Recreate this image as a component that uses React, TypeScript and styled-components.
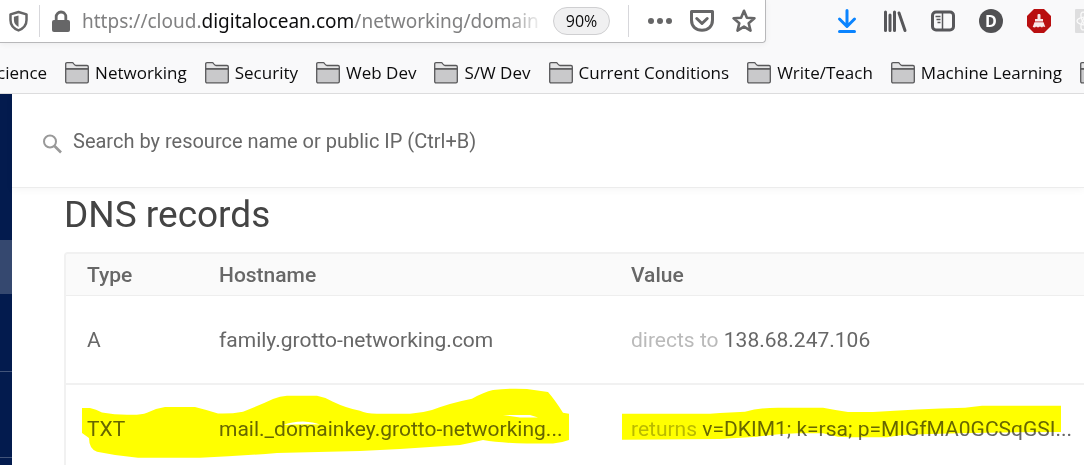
import React from "react";
import styled, { createGlobalStyle } from "styled-components";

const chromeFont = `"Open Sans", "Noto Sans", sans-serif`;
const siteFont = `Roboto, Lato, sans-serif`;

const GlobalStyle = createGlobalStyle`
  *, *::before, *::after { box-sizing: border-box; }
  body { margin: 0; background: #fff; }
  button, input { font: inherit; color: inherit; }
`;

const BrowserWindow = styled.div`
  display: flex;
  flex-direction: column;
  height: 100vh;
  overflow: hidden;
`;

const Chrome = styled.header`
  flex: none;
  background: #f9f9fa;
  border-bottom: 1px solid #dcdcdd;
  font-family: ${chromeFont};
  color: #0c0c0d;
`;

const Toolbar = styled.div`
  display: flex;
  align-items: flex-start;
  height: 52px;
  overflow: hidden;
`;

const AddressBar = styled.div`
  flex: 1;
  min-width: 0;
  display: flex;
  align-items: center;
  height: 43px;
  padding: 0 9px 0 8px;
  background: #fff;
  border: solid #b8b8ba;
  border-width: 0 1px 1px 0;
  border-radius: 0 0 4px 0;
  box-shadow: 0 1px 6px rgba(0, 0, 0, 0.06);
`;

const IconButton = styled.button<{ $size?: number }>`
  flex: none;
  display: flex;
  align-items: center;
  justify-content: center;
  width: ${(p) => p.$size ?? 24}px;
  height: 24px;
  padding: 0;
  border: 0;
  background: none;
  color: #666667;
`;

const Divider = styled.span`
  flex: none;
  width: 1px;
  height: 32px;
  margin: 0 10px;
  background: #d7d7db;
`;

const Url = styled.div`
  flex: 1;
  min-width: 0;
  margin: 0 10px;
  overflow: hidden;
  white-space: nowrap;
  font-family: "Noto Sans", "Open Sans", sans-serif;
  font-size: 19px;
  line-height: 30px;
  color: #808081;
  outline: 0;
  mask-image: linear-gradient(to left, transparent, #000 36px);
`;

const Domain = styled.span`
  color: #0c0c0d;
`;

const ZoomLevel = styled.button`
  flex: none;
  width: 57px;
  height: 28px;
  padding: 0;
  margin-right: 8px;
  border: 1px solid #cfcfd1;
  border-radius: 14px;
  background: #f0f0f1;
  font-size: 16px;
  line-height: 26px;
`;

const PageActions = styled.div`
  flex: none;
  display: flex;
  gap: 18px;
  margin-left: 9px;
`;

const Extensions = styled.div`
  flex: none;
  display: flex;
  gap: 24px;
  width: 318px;
  padding: 9px 0 0 69px;
  overflow: hidden;
`;

const Bookmarks = styled.nav`
  display: flex;
  gap: 18px;
  height: 41px;
  margin-left: -3px;
  overflow: hidden;
`;

const Bookmark = styled.a`
  flex: none;
  display: flex;
  align-items: center;
  gap: 6px;
  color: inherit;
  text-decoration: none;
  font-size: 17px;
  line-height: 24px;
  white-space: nowrap;
`;

const Viewport = styled.div`
  flex: 1;
  min-height: 0;
  display: flex;
  overflow: hidden;
  font-family: ${siteFont};
  color: #676767;
`;

const Sidebar = styled.nav`
  flex: none;
  display: flex;
  flex-direction: column;
  width: 12px;
  background: #031b4e;
`;

const SidebarSection = styled.a<{ $height: number; $active?: boolean; $ruled?: boolean }>`
  flex: none;
  height: ${(p) => p.$height}px;
  background: ${(p) => (p.$active ? "#35486f" : "transparent")};
  border-bottom: ${(p) => (p.$ruled ? "1px solid #42547a" : "0")};
`;

const Content = styled.div`
  flex: 1;
  min-width: 0;
`;

const SearchBar = styled.label`
  display: flex;
  align-items: center;
  gap: 10px;
  height: 94px;
  padding-left: 30px;
  border-bottom: 1px solid #ececec;
  box-shadow: 0 2px 8px rgba(0, 0, 0, 0.04);
`;

const SearchIcon = styled.svg`
  flex: none;
  margin-top: 6px;
`;

const SearchInput = styled.input`
  flex: 1;
  min-width: 0;
  height: 30px;
  padding: 0;
  border: 0;
  outline: 0;
  background: none;
  font-size: 20px;
  &::placeholder { color: #676767; opacity: 1; }
`;

const Main = styled.main`
  padding-left: 52px;
`;

const Title = styled.h1`
  margin: 0;
  padding: 5px 0 15px;
  font-size: 37px;
  font-weight: 400;
  line-height: 44px;
  color: #444;
`;

const Records = styled.div`
  position: relative;
  border: solid #f1f1f1;
  border-width: 2px 0 0 2px;
  border-radius: 4px 0 0 0;
  overflow: hidden;
`;

const Table = styled.table`
  width: 100%;
  table-layout: fixed;
  border-collapse: separate;
  border-spacing: 0;
  font-size: 21px;
  line-height: 26px;
  text-align: left;
`;

const Column = styled.col<{ $width?: number }>`
  width: ${(p) => (p.$width ? `${p.$width}px` : "auto")};
`;

const HeadCell = styled.th`
  height: 42px;
  padding: 0 0 0 21px;
  background: #fafafa;
  border-bottom: 1px solid #eeeeee;
  font-weight: 500;
`;

const Cell = styled.td`
  height: 89px;
  padding: 0 0 0 21px;
  border-bottom: 2px solid #f1f1f1;
  white-space: nowrap;
`;

const Verb = styled.span`
  color: #bababa;
`;

const Marker = styled.svg`
  position: absolute;
  top: 0;
  left: 0;
  mix-blend-mode: multiply;
  pointer-events: none;
`;

const ShieldIcon = () => (
  <svg width="22" height="24" viewBox="0 0 22 24" fill="none">
    <path d="M11 2.6 2.6 5v6c0 5.300 3 8.800 8.400 10.900 5.400-2.100 8.400-5.600 8.400-10.900V5Z" stroke="currentColor" strokeWidth="2.600" strokeLinejoin="round" />
    <path d="M11 6.300 6.200 7.600V11c0 3.300 1.600 5.600 4.800 7.200Z" fill="currentColor" />
  </svg>
);

const LockIcon = () => (
  <svg width="20" height="24" viewBox="0 0 20 24" fill="none">
    <path d="M5.200 12V7.800a4.800 4.800 0 0 1 9.600 0V12" stroke="currentColor" strokeWidth="2.800" />
    <rect x="1" y="11" width="18" height="12" rx="2" fill="currentColor" />
  </svg>
);

const DotsIcon = () => (
  <svg width="24" height="24" viewBox="0 0 24 24" fill="currentColor">
    <circle cx="3" cy="12" r="3" />
    <circle cx="12" cy="12" r="3" />
    <circle cx="21" cy="12" r="3" />
  </svg>
);

const PocketIcon = () => (
  <svg width="24" height="24" viewBox="0 0 24 24" fill="none" stroke="currentColor" strokeWidth="3" strokeLinejoin="round">
    <path d="M1.500 2.500h21V11c0 6.500-4.500 10.200-10.500 10.200S1.500 17.500 1.500 11Z" />
    <path d="m6.800 9.500 5.200 5 5.200-5" strokeLinecap="round" />
  </svg>
);

const StarIcon = () => (
  <svg width="24" height="24" viewBox="0 0 24 24" fill="none" stroke="currentColor" strokeWidth="2.600" strokeLinejoin="round">
    <path d="m12 1.800 2.900 6.900 7.500.6-5.700 4.900 1.800 7.400-6.500-4-6.500 4 1.800-7.400-5.700-4.900 7.500-.6Z" />
  </svg>
);

const DownloadIcon = () => (
  <svg width="24" height="24" viewBox="0 0 24 24" fill="none" stroke="#0a84ff" strokeWidth="3" strokeLinecap="round" strokeLinejoin="round">
    <path d="M12 1.500V17M4.500 10 12 17.500l7.500-7.500M4.500 22.500h15" />
  </svg>
);

const LibraryIcon = () => (
  <svg width="24" height="24" viewBox="0 0 24 24" fill="none" stroke="#57575a" strokeWidth="3" strokeLinecap="round">
    <path d="M2.500 3v18.500M7 6v15.500M11.500 3v18.500M16 4l6 17.500" />
  </svg>
);

const SidebarIcon = () => (
  <svg width="24" height="24" viewBox="0 0 24 24" fill="none" stroke="#57575a">
    <rect x="1.500" y="3" width="21" height="18" rx="3.500" strokeWidth="3" />
    <path d="M11.500 3v18" strokeWidth="1.500" />
    <path d="M4.500 7.500h5M5.500 10.500h4M6.500 13.500h3" strokeWidth="1.500" />
  </svg>
);

const Badge = styled.span`
  display: flex;
  align-items: center;
  justify-content: center;
  width: 24px;
  height: 24px;
  border-radius: 50%;
  background: #515153;
  color: #fff;
  font-size: 16px;
  font-weight: 700;
  line-height: 24px;
`;

const CleanerIcon = () => (
  <svg width="24" height="24" viewBox="0 0 24 24">
    <path d="M7 0h10l7 7v10l-7 7H7l-7-7V7Z" fill="#b90f10" />
    <path d="M10.500 6c0-1.300 3-1.300 3 0V10h2.500v2.500H8V10h2.500ZM7.500 13.300h9l1.800 4.700-2.300-.5-1 1-2-1-2 1-2-1-1 1-2.300-.5Z" fill="#f8e9e9" />
  </svg>
);

const AtomIcon = () => (
  <svg width="24" height="24" viewBox="0 0 24 24" fill="none">
    <rect width="24" height="24" rx="1" fill="#dededf" />
    <g stroke="#fafafa" strokeWidth="1.300">
      <ellipse cx="12" cy="12" rx="10" ry="4" />
      <ellipse cx="12" cy="12" rx="10" ry="4" transform="rotate(60 12 12)" />
      <ellipse cx="12" cy="12" rx="10" ry="4" transform="rotate(120 12 12)" />
    </g>
  </svg>
);

const FolderIcon = () => (
  <svg width="24" height="22" viewBox="0 0 24 22" fill="#c9c9cb" stroke="#58585a" strokeWidth="1.300" strokeLinejoin="round">
    <path d="M.7 7V2C.7 1.200 1.200.7 2 .7h5.500c1 0 1.500 2.800 3.500 2.800h11c.8 0 1.300.5 1.300 1.300V7Z" fill="#e4e4e5" />
    <path d="M.7 7h22.600v12.500c0 .8-.5 1.300-1.300 1.300H2c-.8 0-1.300-.5-1.300-1.300Z" />
  </svg>
);

const folders = ["Networking", "Security", "Web Dev", "S/W Dev", "Current Conditions", "Write/Teach", "Machine Learning"];

const records = [
  { type: "A", host: "family.grotto-networking.com", verb: "directs to", value: "138.68.247.106" },
  { type: "TXT", host: "mail._domainkey.grotto-networking...", verb: "returns", value: "v=DKIM1; k=rsa; p=MIGfMA0GCSqGSI..." },
];

export default function App() {
  return (
    <BrowserWindow>
      <GlobalStyle />
      <Chrome>
        <Toolbar>
          <AddressBar>
            <IconButton $size={21} aria-label="Tracking protection"><ShieldIcon /></IconButton>
            <Divider />
            <IconButton $size={22} aria-label="Site information"><LockIcon /></IconButton>
            <Url role="textbox" aria-label="Address" contentEditable suppressContentEditableWarning spellCheck={false}>
              https://cloud.<Domain>digitalocean.com</Domain>/networking/domain
            </Url>
            <ZoomLevel>90%</ZoomLevel>
            <Divider />
            <PageActions>
              <IconButton aria-label="Page actions"><DotsIcon /></IconButton>
              <IconButton aria-label="Save to Pocket"><PocketIcon /></IconButton>
              <IconButton aria-label="Bookmark this page"><StarIcon /></IconButton>
            </PageActions>
          </AddressBar>
          <Extensions>
            <IconButton aria-label="Downloads"><DownloadIcon /></IconButton>
            <IconButton aria-label="Library"><LibraryIcon /></IconButton>
            <IconButton aria-label="Sidebars"><SidebarIcon /></IconButton>
            <IconButton aria-label="Account"><Badge>D</Badge></IconButton>
            <IconButton aria-label="Cleaner"><CleanerIcon /></IconButton>
            <IconButton aria-label="Developer tools"><AtomIcon /></IconButton>
          </Extensions>
        </Toolbar>
        <Bookmarks aria-label="Bookmarks">
          <Bookmark href="#">cience</Bookmark>
          {folders.map((name) => (
            <Bookmark href="#" key={name}>
              <FolderIcon />
              {name}
            </Bookmark>
          ))}
          <Bookmark href="#" aria-label="More bookmarks">
            <FolderIcon />
          </Bookmark>
        </Bookmarks>
      </Chrome>
      <Viewport>
        <Sidebar aria-label="Main">
          <SidebarSection href="#" aria-label="Manage" $height={146} />
          <SidebarSection href="#" aria-label="Networking" $height={54} $active />
          <SidebarSection href="#" aria-label="Monitoring" $height={78} $ruled />
          <SidebarSection href="#" aria-label="Discover" $height={86} $ruled />
        </Sidebar>
        <Content>
          <SearchBar>
            <SearchIcon width="21" height="20" viewBox="0 0 21 20" fill="none" stroke="#999">
              <circle cx="8" cy="7.500" r="6" strokeWidth="2" />
              <path d="m12.500 12 6.500 6.500" strokeWidth="2.600" />
            </SearchIcon>
            <SearchInput type="search" aria-label="Search" placeholder="Search by resource name or public IP (Ctrl+B)" />
          </SearchBar>
          <Main>
            <Title>DNS records</Title>
            <Records>
              <Table>
                <colgroup>
                  <Column $width={132} />
                  <Column $width={412} />
                  <Column />
                </colgroup>
                <thead>
                  <tr>
                    <HeadCell scope="col">Type</HeadCell>
                    <HeadCell scope="col">Hostname</HeadCell>
                    <HeadCell scope="col">Value</HeadCell>
                  </tr>
                </thead>
                <tbody>
                  {records.map((r) => (
                    <tr key={r.type}>
                      <Cell>{r.type}</Cell>
                      <Cell>{r.host}</Cell>
                      <Cell><Verb>{r.verb}</Verb> {r.value}</Cell>
                    </tr>
                  ))}
                </tbody>
              </Table>
              <Marker width="1018" height="220" viewBox="66 254 1018 220" fill="#ff0" fillRule="evenodd" aria-hidden="true">
                <path d="M82 408H90Q96 409 102 412.500Q116 415 130 414.700Q141 415 147 412.700Q156 408 165 407H195Q207 410 218 413.500Q231 414 243 411.700Q258 406 273 399Q280 396 287 395.700H317Q325 397 333 401.700Q346 408 360 410.700Q366 413.700 377 413.700H410Q422 413 432 410Q450 403 472 398.700Q484 392 493 390Q510 388 527 389L548 392Q555 400 563 412.700L569 413.700V440Q561 443 553 443.500H527Q500 443 483 440Q470 443 460 445Q430 447 400 449L360 451L277 453Q240 456 200 457.700H138Q117 456 97 451.700Q89 449 89 438L82 433ZM283 425Q292 421.500 303 421.500Q314 422 320 424.500Q300 424 283 425ZM503 415H530L538 417.500H520Z" />
                <path d="M622 413.700H710L720 413L745 411.700Q760 407.700 778 407.700H823Q835 410 848 412H873Q915 409 965 407.700L982 405.700H1061V432Q975 432 902 435L887 437.300H850L838 436.700L823 433.300H797Q775 434 757 436.700L720 439L622 439.700Z" />
              </Marker>
            </Records>
          </Main>
        </Content>
      </Viewport>
    </BrowserWindow>
  );
}
